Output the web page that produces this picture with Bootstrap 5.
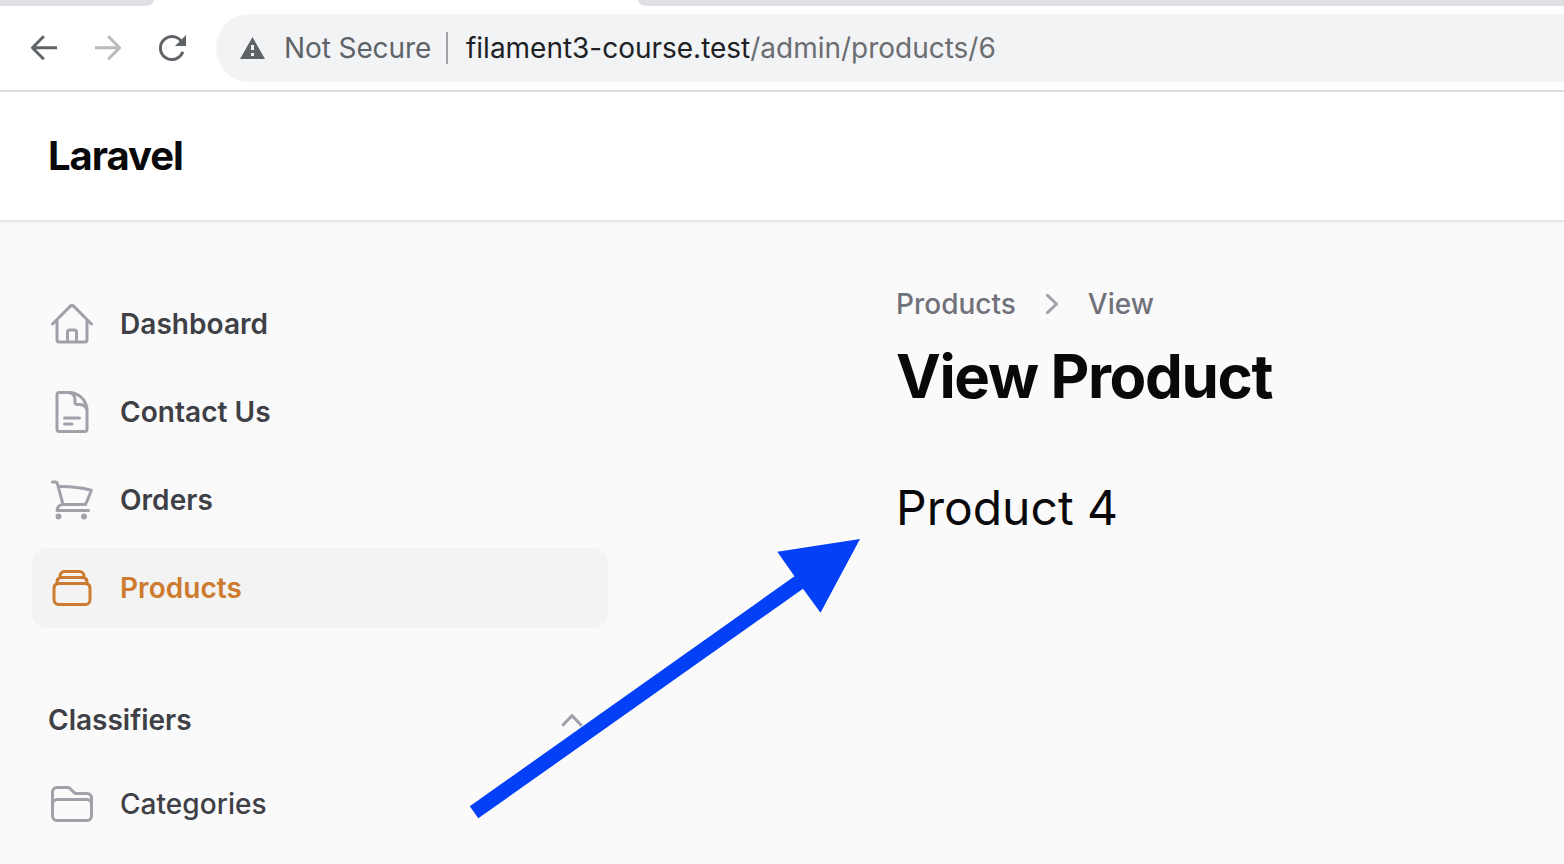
<!DOCTYPE html>
<html lang="en">
<head>
<meta charset="utf-8">
<title>View Product - Laravel</title>
<link href="https://cdn.jsdelivr.net/npm/bootstrap@5.3.0/dist/css/bootstrap.min.css" rel="stylesheet">
<style>
body{font-family:Inter,"Liberation Sans",sans-serif;font-size:28px;line-height:40px;color:#09090b;background:#fafafa;height:864px}
.tabstrip{height:6px}
.tab-a,.tab-b{background:#dee0e4}
.tab-a{width:154px;border-bottom-right-radius:14px 10px}
.tab-b{width:926px;border-bottom-left-radius:14px 10px}
.toolbar{height:86px;padding-top:8px;border-bottom:2px solid #dadcde;background:#fff}
.tools{width:216px;height:68px}
.omnibox{height:68px;border-radius:34px 0 0 34px;background:#f1f3f5;color:#5f6368;padding-left:24px;white-space:pre}
.warn{width:26px;height:68px}
.secure{margin-left:18px;width:162px;font-size:28px;letter-spacing:-.1px}
.divide{width:2px;height:32px;background:#a0a2a5}
.url{margin-left:18px;letter-spacing:-.015px;color:#6b6d70}
.url span{color:#202124}
.topbar{height:128px;padding-left:48px;background:#fff;box-shadow:0 2px 0 #e6e6e7,0 3px 3px rgba(0,0,0,.05)}
.logo{font-size:40px;font-weight:700;letter-spacing:-1.05px}
.side{width:640px;padding:64px 32px 0}
.item{height:80px;padding:0 16px;gap:24px;border-radius:16px;color:#3f3f46;font-weight:600;letter-spacing:.05px}
.item svg{width:48px;height:48px;flex:none;fill:none;stroke:#a1a1aa;stroke-width:1.5;stroke-linecap:round;stroke-linejoin:round}
.item.current{background:#f3f3f4;color:#cd7b2e}
.item.current svg{stroke:#cd7b2e}
.group-title{height:40px;margin:72px 0 24px;padding:0 16px;font-weight:600;color:#3f3f46}
.chev{width:40px;height:40px;fill:none;stroke:#a1a1aa;stroke-width:1.5;stroke-linecap:round;stroke-linejoin:round}
.main-pane{padding:64px 0 0 256px}
.crumbs{gap:16px;font-weight:500;color:#71717a}
.title{font-size:60px;line-height:72px;font-weight:700;letter-spacing:-1.35px;margin:16px 0 0}
.product{font-size:48px;line-height:64px;margin-top:64px}
.pointer{left:460px;top:530px}
</style>
</head>
<body class="position-relative overflow-hidden">
<div class="tabstrip d-flex justify-content-between bg-white"><div class="tab-a"></div><div class="tab-b"></div></div>
<div class="toolbar d-flex">
  <svg class="tools flex-shrink-0" viewBox="0 14 216 68" fill="none" stroke-width="3" stroke-linejoin="round">
    <path d="M57 47.7H33M43.8 36.2 32.4 47.7 43.8 59.2" stroke="#5f6368"/>
    <path d="M95 47.7H119M108.2 36.2 119.6 47.7 108.2 59.2" stroke="#bababc"/>
    <path d="M182.5 43.5A11.5 11.5 0 1 0 182.8 51.8" stroke="#5f6368"/>
    <path d="M186 35V46H175Z" fill="#5f6368"/>
  </svg>
  <div class="omnibox d-flex align-items-center flex-grow-1">
    <svg class="warn" viewBox="240 14 26 68"><path d="M252.5 37 265 59H240Z" fill="#5f6368"/><path d="M251 45h3v5h-3zM251 53h3v3h-3z" fill="#f1f3f5"/></svg>
    <div class="secure">Not Secure</div><div class="divide"></div>
    <div class="url"><span>filament3-course.test</span>/admin/products/6</div>
  </div>
</div>
<header class="topbar d-flex align-items-center position-relative"><div class="logo">Laravel</div></header>
<div class="d-flex">
  <nav class="side flex-shrink-0">
    <div class="d-flex flex-column gap-2">
      <div class="item d-flex align-items-center"><svg viewBox="0 0 24 24"><path d="m2.25 12 8.954-8.955c.44-.439 1.152-.439 1.591 0L21.75 12M4.5 9.75v10.125c0 .621.504 1.125 1.125 1.125H9.75v-4.875c0-.621.504-1.125 1.125-1.125h2.25c.621 0 1.125.504 1.125 1.125V21h4.125c.621 0 1.125-.504 1.125-1.125V9.75M8.25 21h8.25"/></svg>Dashboard</div>
      <div class="item d-flex align-items-center"><svg viewBox="0 0 24 24"><path d="M19.5 14.25v-2.625a3.375 3.375 0 0 0-3.375-3.375h-1.5A1.125 1.125 0 0 1 13.5 7.125v-1.5a3.375 3.375 0 0 0-3.375-3.375H8.25m0 12.75h7.5m-7.5 3H12M10.5 2.25H5.625c-.621 0-1.125.504-1.125 1.125v17.25c0 .621.504 1.125 1.125 1.125h12.75c.621 0 1.125-.504 1.125-1.125V11.25a9 9 0 0 0-9-9Z"/></svg>Contact Us</div>
      <div class="item d-flex align-items-center"><svg viewBox="0 0 24 24"><path d="M2.25 3h1.386c.51 0 .955.343 1.087.835l.383 1.437M7.5 14.25a3 3 0 0 0-3 3h15.75m-12.75-3h11.218c1.121-2.3 2.1-4.684 2.924-7.138a60.114 60.114 0 0 0-16.536-1.84M7.5 14.25 5.106 5.272M6 20.25a.75.75 0 1 1-1.5 0 .75.75 0 0 1 1.5 0Zm12.75 0a.75.75 0 1 1-1.5 0 .75.75 0 0 1 1.5 0Z"/></svg>Orders</div>
      <div class="item current d-flex align-items-center"><svg viewBox="0 0 24 24"><path d="M6 6.878V6a2.25 2.25 0 0 1 2.25-2.25h7.5A2.25 2.25 0 0 1 18 6v.878m-12 0c.235-.083.487-.128.75-.128h10.5c.263 0 .515.045.75.128m-12 0A2.25 2.25 0 0 0 4.5 9v.878m13.5-3A2.25 2.25 0 0 1 19.5 9v.878m0 0a2.246 2.246 0 0 0-.75-.128H5.25c-.263 0-.515.045-.75.128m15 0A2.25 2.25 0 0 1 21 12v6a2.25 2.25 0 0 1-2.25 2.25H5.25A2.25 2.25 0 0 1 3 18v-6c0-.98.626-1.813 1.5-2.122"/></svg>Products</div>
    </div>
    <div class="group-title d-flex justify-content-between align-items-center">Classifiers<svg class="chev" viewBox="0 0 20 20"><path d="M5.6 12.4 10 7.8 14.4 12.4"/></svg></div>
    <div class="item fw-medium d-flex align-items-center" style="font-weight:500"><svg viewBox="0 0 24 24"><path d="M2.25 12.75V12A2.25 2.25 0 0 1 4.5 9.75h15A2.25 2.25 0 0 1 21.75 12v.75m-8.69-6.44-2.12-2.12a1.5 1.5 0 0 0-1.061-.44H4.5A2.25 2.25 0 0 0 2.25 6v12a2.25 2.25 0 0 0 2.25 2.25h15A2.25 2.25 0 0 0 21.75 18V9a2.25 2.25 0 0 0-2.25-2.25h-5.379a1.5 1.5 0 0 1-1.06-.44Z"/></svg>Categories</div>
  </nav>
  <main class="main-pane flex-grow-1">
    <div class="crumbs d-flex align-items-center">Products<svg class="chev" viewBox="0 0 20 20"><path d="M7.7 5.7 12.3 10 7.7 14.3"/></svg>View</div>
    <h1 class="title">View Product</h1>
    <div class="product">Product 4</div>
  </main>
</div>
<svg class="pointer position-absolute" width="410" height="300" viewBox="460 530 410 300"><path d="M469.8 806.3 794.5 576.3 777.3 551.8 860 539 820.5 612.7 803 588.8 478.3 818.3Z" fill="#0340f7"/></svg>
<script src="https://cdn.jsdelivr.net/npm/bootstrap@5.3.0/dist/js/bootstrap.bundle.min.js"></script>
</body>
</html>
